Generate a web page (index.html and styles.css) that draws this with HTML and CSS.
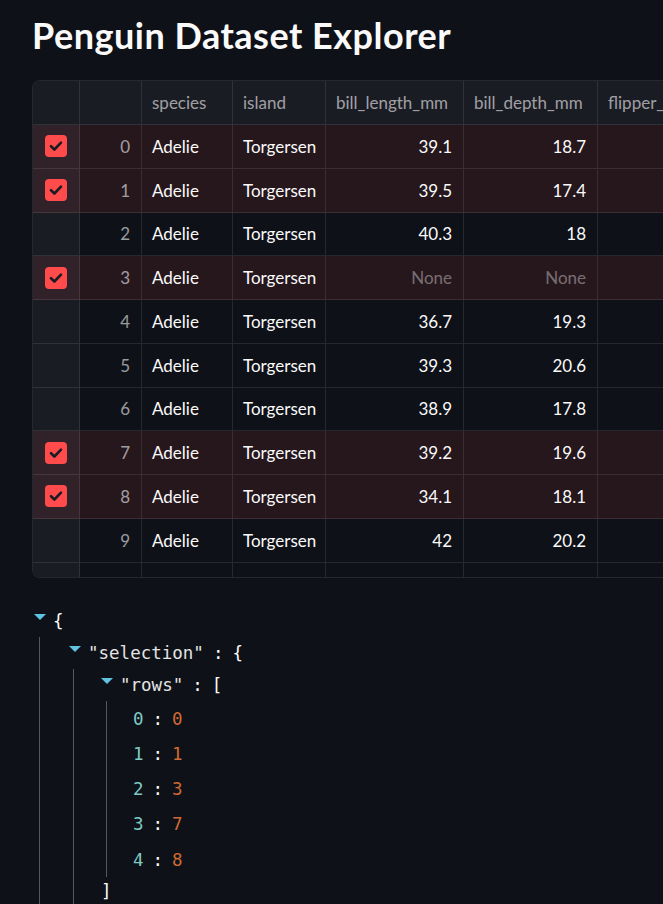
FILE: index.html
```html
<!DOCTYPE html>
<html>
<head>
<meta charset="utf-8">
<link rel="stylesheet" href="styles.css">
</head>
<body>
<main class="page">
  <h1 class="title">Penguin Dataset Explorer</h1>

  <div class="grid">
    <div class="row head">
      <div class="cell sel"></div>
      <div class="cell idx"></div>
      <div class="cell">species</div>
      <div class="cell">island</div>
      <div class="cell">bill_length_mm</div>
      <div class="cell">bill_depth_mm</div>
      <div class="cell">flipper_length_mm</div>
    </div>

    <div class="row on">
      <div class="cell sel"><span class="box"><svg viewBox="0 0 22 22"><path d="M6 11.2l3.4 3.3 6.6-6.8"/></svg></span></div>
      <div class="cell idx">0</div><div class="cell">Adelie</div><div class="cell">Torgersen</div>
      <div class="cell num">39.1</div><div class="cell num">18.7</div><div class="cell num"></div>
    </div>
    <div class="row on">
      <div class="cell sel"><span class="box"><svg viewBox="0 0 22 22"><path d="M6 11.2l3.4 3.3 6.6-6.8"/></svg></span></div>
      <div class="cell idx">1</div><div class="cell">Adelie</div><div class="cell">Torgersen</div>
      <div class="cell num">39.5</div><div class="cell num">17.4</div><div class="cell num"></div>
    </div>
    <div class="row">
      <div class="cell sel"></div>
      <div class="cell idx">2</div><div class="cell">Adelie</div><div class="cell">Torgersen</div>
      <div class="cell num">40.3</div><div class="cell num">18</div><div class="cell num"></div>
    </div>
    <div class="row on">
      <div class="cell sel"><span class="box"><svg viewBox="0 0 22 22"><path d="M6 11.2l3.4 3.3 6.6-6.8"/></svg></span></div>
      <div class="cell idx">3</div><div class="cell">Adelie</div><div class="cell">Torgersen</div>
      <div class="cell num none">None</div><div class="cell num none">None</div><div class="cell num"></div>
    </div>
    <div class="row">
      <div class="cell sel"></div>
      <div class="cell idx">4</div><div class="cell">Adelie</div><div class="cell">Torgersen</div>
      <div class="cell num">36.7</div><div class="cell num">19.3</div><div class="cell num"></div>
    </div>
    <div class="row">
      <div class="cell sel"></div>
      <div class="cell idx">5</div><div class="cell">Adelie</div><div class="cell">Torgersen</div>
      <div class="cell num">39.3</div><div class="cell num">20.6</div><div class="cell num"></div>
    </div>
    <div class="row">
      <div class="cell sel"></div>
      <div class="cell idx">6</div><div class="cell">Adelie</div><div class="cell">Torgersen</div>
      <div class="cell num">38.9</div><div class="cell num">17.8</div><div class="cell num"></div>
    </div>
    <div class="row on">
      <div class="cell sel"><span class="box"><svg viewBox="0 0 22 22"><path d="M6 11.2l3.4 3.3 6.6-6.8"/></svg></span></div>
      <div class="cell idx">7</div><div class="cell">Adelie</div><div class="cell">Torgersen</div>
      <div class="cell num">39.2</div><div class="cell num">19.6</div><div class="cell num"></div>
    </div>
    <div class="row on">
      <div class="cell sel"><span class="box"><svg viewBox="0 0 22 22"><path d="M6 11.2l3.4 3.3 6.6-6.8"/></svg></span></div>
      <div class="cell idx">8</div><div class="cell">Adelie</div><div class="cell">Torgersen</div>
      <div class="cell num">34.1</div><div class="cell num">18.1</div><div class="cell num"></div>
    </div>
    <div class="row">
      <div class="cell sel"></div>
      <div class="cell idx">9</div><div class="cell">Adelie</div><div class="cell">Torgersen</div>
      <div class="cell num">42</div><div class="cell num">20.2</div><div class="cell num"></div>
    </div>
    <div class="row">
      <div class="cell sel"></div>
      <div class="cell idx">10</div><div class="cell">Adelie</div><div class="cell">Torgersen</div>
      <div class="cell num">37.8</div><div class="cell num">17.1</div><div class="cell num"></div>
    </div>
  </div>

  <div class="json">
    <div class="line"><span class="caret"></span><span class="p">{</span></div>
    <div class="kids k1">
      <div class="line"><span class="caret"></span><span class="key">"selection"</span><span class="colon">:</span><span class="p">{</span></div>
      <div class="kids k2">
        <div class="line"><span class="caret"></span><span class="key">"rows"</span><span class="colon">:</span><span class="p">[</span></div>
        <div class="kids k3">
          <div class="item"><span class="ik">0</span><span class="colon">:</span><span class="iv">0</span></div>
          <div class="item"><span class="ik">1</span><span class="colon">:</span><span class="iv">1</span></div>
          <div class="item"><span class="ik">2</span><span class="colon">:</span><span class="iv">3</span></div>
          <div class="item"><span class="ik">3</span><span class="colon">:</span><span class="iv">7</span></div>
          <div class="item"><span class="ik">4</span><span class="colon">:</span><span class="iv">8</span></div>
        </div>
        <div class="line close"><span class="p">]</span></div>
      </div>
    </div>
  </div>
</main>
</body>
</html>
```

FILE: styles.css
```css
html, body {
  margin: 0;
  padding: 0;
  background: #0e1117;
  overflow: hidden;
}

.page {
  padding: 0 0 0 32px;
  width: 900px;
  color: #fafafa;
  font-family: "Lato", "Noto Sans", sans-serif;
}

.title {
  margin: 0;
  padding-top: 14px;
  height: 80px;
  box-sizing: border-box;
  font-size: 36px;
  line-height: 42px;
  font-weight: 700;
  color: #fafafa;
  letter-spacing: 0.5px;
}

.grid {
  width: 800px;
  height: 498px;
  box-sizing: border-box;
  border: 1px solid rgba(250, 250, 250, 0.1);
  border-radius: 8px;
  overflow: hidden;
  background: #0e1117;
}

.row {
  display: grid;
  grid-template-columns: 47px 62px 91px 93px 138px 134px 1fr;
  height: 43.75px;
}

.row.head {
  height: 44px;
  background: #1a1c24;
  color: rgba(250, 250, 250, 0.6);
}

.row.on {
  background: #26171c;
}

.cell {
  box-sizing: border-box;
  border-right: 1px solid rgba(250, 250, 250, 0.1);
  border-bottom: 1px solid rgba(250, 250, 250, 0.1);
  padding: 0 10px;
  display: flex;
  align-items: center;
  font-size: 17px;
  white-space: nowrap;
  overflow: hidden;
}

.cell.num, .cell.idx {
  justify-content: flex-end;
  padding-right: 11px;
}

.cell.idx {
  color: rgba(250, 250, 250, 0.6);
}

.cell.none {
  color: rgba(250, 250, 250, 0.4);
}

.cell.sel {
  background: #1a1c24;
  justify-content: center;
  padding: 0;
}

.row.on .cell.sel {
  background: #312128;
}

.box {
  width: 22px;
  height: 22px;
  border-radius: 4px;
  background: #ff4b4b;
  display: block;
  margin-left: -1px;
}

.box svg {
  display: block;
  width: 22px;
  height: 22px;
  fill: none;
  stroke: #1a1c24;
  stroke-width: 2.6;
  stroke-linecap: round;
  stroke-linejoin: round;
}

.json {
  margin-top: 27px;
  padding-left: 2px;
  font-family: "DejaVu Sans Mono", monospace;
  font-size: 17.5px;
  color: #fafafa;
}

.line {
  height: 32px;
  display: flex;
  align-items: center;
}

.caret {
  width: 0;
  height: 0;
  border-left: 6px solid transparent;
  border-right: 6px solid transparent;
  border-top: 6px solid #5fc4e2;
  margin: -8px 7px 0 0;
}

.key {
  color: #e4e4e4;
}

.colon {
  margin: 0 9px;
  color: #fafafa;
}

.kids {
  border-left: 1px solid #55575c;
}

.k1 {
  margin-left: 5px;
  padding-left: 29px;
}

.k2 {
  margin-left: 4px;
  padding-left: 27px;
}

.k3 {
  margin-left: 5px;
  padding-left: 26px;
}

.item {
  height: 35.25px;
  display: flex;
  align-items: center;
}

.ik {
  color: #7fcac4;
}

.iv {
  color: #d06a33;
}

.close {
  height: 28px;
}
```
